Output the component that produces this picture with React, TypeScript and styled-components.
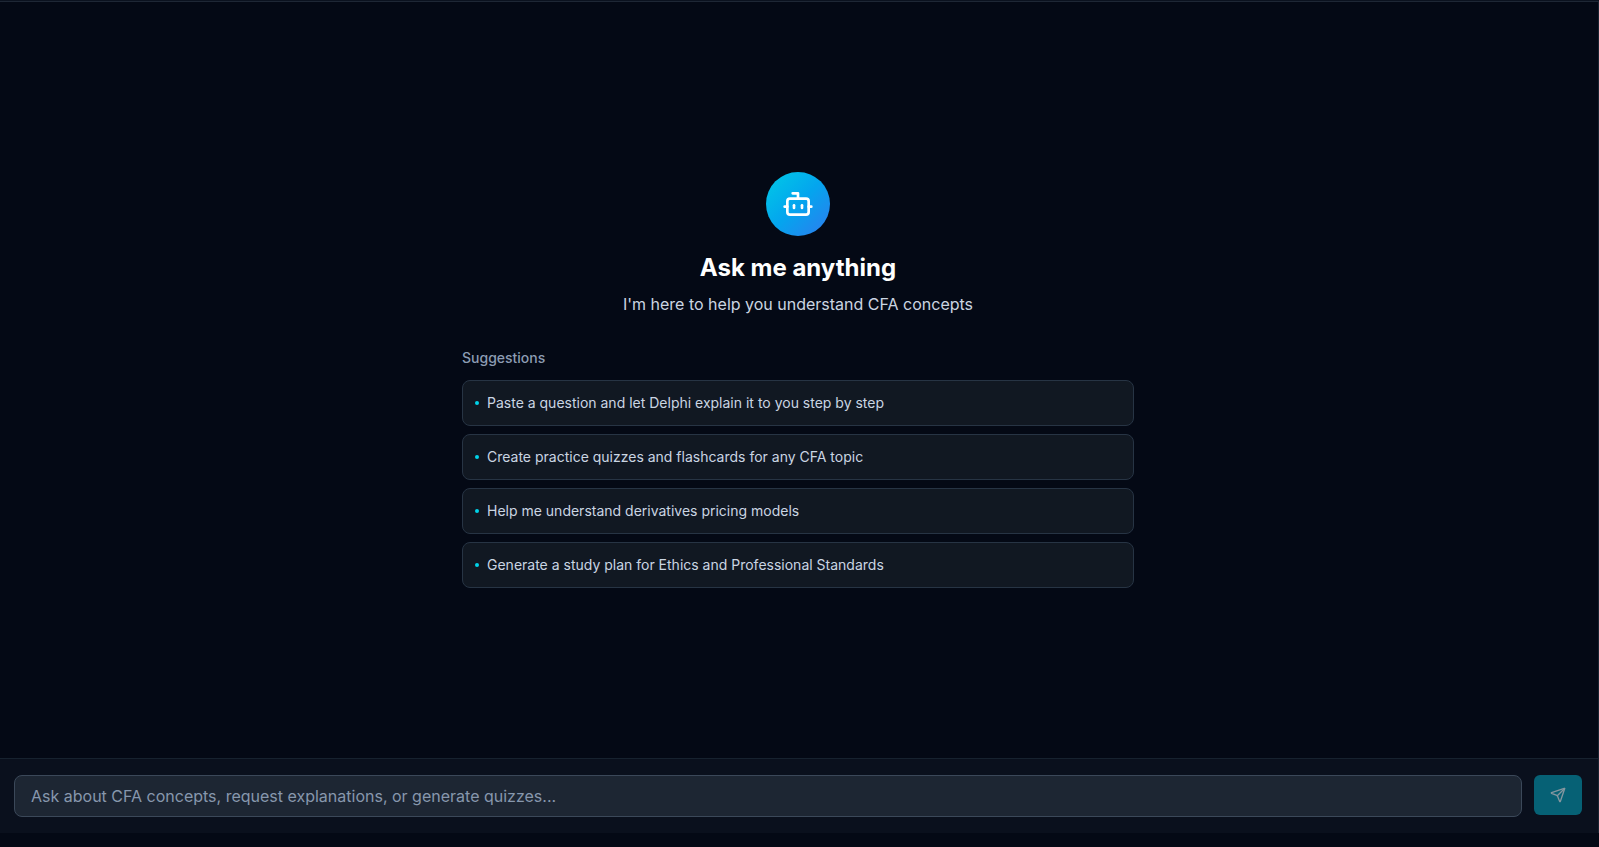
import { Bot, Send } from "lucide-react";
import React from "react";
import styled, { createGlobalStyle } from "styled-components";

const suggestions = [
  "Paste a question and let Delphi explain it to you step by step",
  "Create practice quizzes and flashcards for any CFA topic",
  "Help me understand derivatives pricing models",
  "Generate a study plan for Ethics and Professional Standards",
];

function Welcome() {
  return (
    <Intro>
      <Avatar>
        <Bot size={32} />
      </Avatar>
      <h2>Ask me anything</h2>
      <p>I'm here to help you understand CFA concepts</p>
    </Intro>
  );
}

function Suggestions() {
  return (
    <SuggestionList>
      <h3>Suggestions</h3>
      {suggestions.map((text) => (
        <Suggestion key={text} type="button">
          <Dot />
          <span>{text}</span>
        </Suggestion>
      ))}
    </SuggestionList>
  );
}

function App() {
  return (
    <Page>
      <GlobalStyle />
      <Panel>
        <Messages>
          <Welcome />
          <Suggestions />
        </Messages>
        <Composer onSubmit={(e) => e.preventDefault()}>
          <Input placeholder="Ask about CFA concepts, request explanations, or generate quizzes..." />
          <SendButton disabled aria-label="Send">
            <Send size={16} />
          </SendButton>
        </Composer>
      </Panel>
    </Page>
  );
}

export default App;

const GlobalStyle = createGlobalStyle`
  * {
    box-sizing: border-box;
    margin: 0;
  }
  body {
    background-color: #040915;
    font-family: Inter, "Liberation Sans", sans-serif;
    overflow: hidden;
  }
  button, input {
    font-family: inherit;
  }
`;

const Page = styled.div`
  height: 100vh;
  padding: 0 0 14px;
  border-top: 1px solid #0b121f;
`;

const Panel = styled.main`
  height: 100%;
  display: flex;
  flex-direction: column;
  border-top: 1px solid #1e2735;
  border-right: 1px solid #1a2432;
`;

const Messages = styled.section`
  flex: 1;
  display: flex;
  flex-direction: column;
  align-items: center;
  justify-content: center;
  gap: 32px;
  padding-right: 2px;
`;

const Intro = styled.div`
  display: flex;
  flex-direction: column;
  align-items: center;
  h2 {
    color: #ffffff;
    font-size: 24px;
    line-height: 32px;
    font-weight: 700;
    margin: 16px 0 8px;
  }
  p {
    color: #cbd5e1;
    font-size: 16px;
    line-height: 24px;
  }
`;

const Avatar = styled.div`
  width: 64px;
  height: 64px;
  border-radius: 50%;
  display: flex;
  align-items: center;
  justify-content: center;
  color: #ffffff;
  background: linear-gradient(135deg, #00cbe6, #04a5ee 50%, #2f7bee);
`;

const SuggestionList = styled.div`
  width: 672px;
  display: flex;
  flex-direction: column;
  gap: 8px;
  h3 {
    color: #8c9cb3;
    font-size: 14px;
    line-height: 20px;
    font-weight: 500;
    margin-bottom: 4px;
  }
`;

const Suggestion = styled.button`
  height: 46px;
  display: flex;
  align-items: center;
  gap: 8px;
  padding: 0 12px;
  border: 1px solid #273444;
  border-radius: 8px;
  background-color: #111822;
  color: #cad5e2;
  font-size: 14px;
  line-height: 20px;
  text-align: left;
`;

const Dot = styled.span`
  width: 4px;
  height: 4px;
  border-radius: 50%;
  background-color: #00d3e8;
`;

const Composer = styled.form`
  display: flex;
  align-items: flex-start;
  gap: 12px;
  padding: 16px 16px 16px 14px;
  border-top: 1px solid #17222f;
  background-color: #0a101d;
`;

const Input = styled.input`
  flex: 1;
  height: 42px;
  padding: 0 16px;
  border: 1px solid #3b4859;
  border-radius: 8px;
  background-color: #1d2633;
  color: #ffffff;
  font-size: 16px;
  &::placeholder {
    color: #8797ad;
    opacity: 1;
  }
`;

const SendButton = styled.button`
  width: 48px;
  height: 40px;
  display: flex;
  align-items: center;
  justify-content: center;
  padding: 0;
  border: 0;
  border-radius: 6px;
  color: #84969f;
  background-color: #066175;
`;
